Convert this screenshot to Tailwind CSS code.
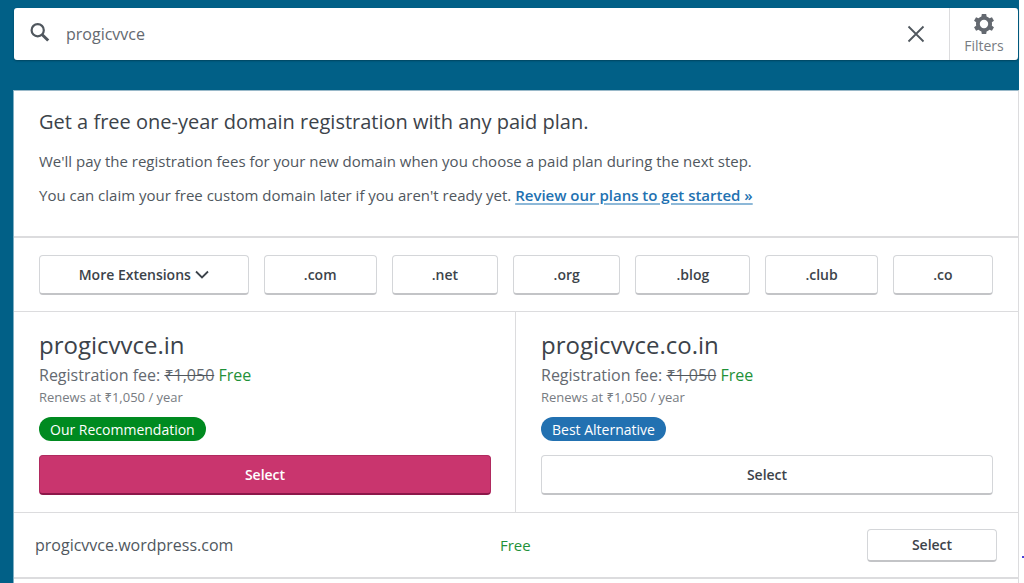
<!DOCTYPE html>
<html lang="en">
<head>
<meta charset="utf-8">
<meta name="viewport" content="width=device-width, initial-scale=1">
<title>Domain search</title>
<script src="https://cdn.jsdelivr.net/npm/@tailwindcss/browser@4"></script>
</head>
<body class="bg-white font-['Open_Sans','Noto_Sans',sans-serif] text-[15px] text-[#50575e]">
<div class="relative flex min-h-screen flex-col pr-[5px]">
  <div class="bg-[#016087] pt-2 pr-px pb-[30px] pl-[14px]">
    <form class="flex h-[52px] items-stretch rounded-[3px] bg-white shadow-[0_1px_2px_#004560]" role="search">
      <label for="q" class="flex w-[52px] items-center pl-4" aria-label="Search domains">
        <svg class="mb-1 size-5" viewBox="0 0 20 20" fill="none" stroke="#50575e"><circle cx="7.7" cy="8.2" r="6.1" stroke-width="2.2"/><path d="M12 12.500l6.200 6" stroke-width="3"/></svg>
      </label>
      <input id="q" type="text" value="progicvvce" class="min-w-0 flex-1 bg-transparent text-[16px] text-[#646970] outline-none">
      <button type="button" aria-label="Clear search" class="flex w-[66px] items-center justify-center">
        <svg class="size-5" viewBox="0 0 20 20" fill="none" stroke="#50575e" stroke-width="1.8"><path d="M2.500 2.500l15 15M17.500 2.500l-15 15"/></svg>
      </button>
      <button type="button" class="flex w-[69px] flex-col items-center border-l border-[#dcdcde] pt-1 text-[14px] leading-5 text-[#787c82]">
        <svg class="size-6" viewBox="0 0 24 24" fill="#646970"><path d="M20 12c0-.57-.05-1.120-.15-1.660l2.110-1.650-2-3.460-2.480 1a8 8 0 0 0-2.880-1.660L14.200 2h-4.400l-.4 2.570a8 8 0 0 0-2.880 1.660l-2.480-1-2 3.460 2.110 1.650a8.500 8.500 0 0 0 0 3.320l-2.110 1.650 2 3.460 2.480-1a8 8 0 0 0 2.880 1.660l.4 2.570h4.400l.4-2.570a8 8 0 0 0 2.880-1.660l2.480 1 2-3.460-2.110-1.650c.1-.54.15-1.090.15-1.660zm-8 4.200a4.200 4.200 0 1 1 0-8.400 4.200 4.200 0 0 1 0 8.400z"/></svg>
        <span>Filters</span>
      </button>
    </form>
  </div>
  <div class="flex flex-1 flex-col bg-[#016087] pl-[13px]">
    <main class="flex-1 border border-t-[#9ab9c9] border-r-[#dcdcde] border-b-0 border-l-[#80afc3] bg-white">
      <section class="h-[147px] border-b-2 border-[#dcdcde] px-[25px] pt-4">
        <h1 class="text-[20px] leading-[30px] text-[#3c434a]">Get a free one-year domain registration with any paid plan.</h1>
        <p class="mt-3 leading-6">We'll pay the registration fees for your new domain when you choose a paid plan during the next step.</p>
        <p class="mt-[10px] leading-6">You can claim your free custom domain later if you aren't ready yet. <a href="#" class="font-semibold text-[#2271b1] underline decoration-[#8db8d8] decoration-2 underline-offset-2">Review our plans to get started »</a></p>
      </section>
      <section class="flex gap-[15px] border-b border-[#dcdcde] px-[25px] pt-[17px] pb-4 text-[14px] font-semibold text-[#3c434a]">
        <button class="flex h-10 grow-[211] basis-0 items-center justify-center gap-1 rounded-[4px] border border-b-2 border-[#d4d6d9] border-b-[#c3c4c7]">More Extensions
          <svg class="w-[14px]" viewBox="0 0 14 10" fill="none" stroke="#3c434a" stroke-width="1.800"><path d="M1 1.500l6 6 6-6"/></svg></button>
        <button class="h-10 grow-[113] basis-0 rounded-[4px] border border-b-2 border-[#d4d6d9] border-b-[#c3c4c7]">.com</button>
        <button class="h-10 grow-[106] basis-0 rounded-[4px] border border-b-2 border-[#d4d6d9] border-b-[#c3c4c7]">.net</button>
        <button class="h-10 grow-[107] basis-0 rounded-[4px] border border-b-2 border-[#d4d6d9] border-b-[#c3c4c7]">.org</button>
        <button class="h-10 grow-[115] basis-0 rounded-[4px] border border-b-2 border-[#d4d6d9] border-b-[#c3c4c7]">.blog</button>
        <button class="h-10 grow-[112] basis-0 rounded-[4px] border border-b-2 border-[#d4d6d9] border-b-[#c3c4c7]">.club</button>
        <button class="h-10 grow-[100] basis-0 rounded-[4px] border border-b-2 border-[#d4d6d9] border-b-[#c3c4c7]">.co</button>
      </section>
      <div class="grid grid-cols-2 border-b border-[#dcdcde]">
        <article class="border-r border-[#dcdcde] pr-6 pl-[25px] pt-[15px] pb-[17px]">
          <h2 class="text-[24px] leading-9 text-[#3c434a]">progicvvce.in</h2>
          <p class="text-[16px] leading-6 text-[#646970]">Registration fee: <s class="decoration-[#50575e]">₹1,050</s> <span class="text-[#1f9139]">Free</span></p>
          <p class="text-[13px] leading-5 text-[#787c82]">Renews at ₹1,050 / year</p>
          <span class="mt-[10px] flex h-6 w-fit items-center rounded-full bg-[#008a20] px-[11px] text-[14px] text-white">Our Recommendation</span>
          <button class="mt-[14px] h-10 w-full rounded-[4px] border border-b-2 border-[#b02a5f] border-b-[#8c1749] bg-[#c9356e] text-[14px] font-semibold text-white">Select</button>
        </article>
        <article class="px-[25px] pt-[15px] pb-[17px]">
          <h2 class="text-[24px] leading-9 text-[#3c434a]">progicvvce.co.in</h2>
          <p class="text-[16px] leading-6 text-[#646970]">Registration fee: <s class="decoration-[#50575e]">₹1,050</s> <span class="text-[#1f9139]">Free</span></p>
          <p class="text-[13px] leading-5 text-[#787c82]">Renews at ₹1,050 / year</p>
          <span class="mt-[10px] flex h-6 w-fit items-center rounded-full bg-[#2271b1] px-[11px] text-[14px] text-white">Best Alternative</span>
          <button class="mt-[14px] h-10 w-full rounded-[4px] border border-b-2 border-[#d4d6d9] border-b-[#c3c4c7] text-[14px] font-semibold text-[#3c434a]">Select</button>
        </article>
      </div>
      <div class="grid h-[66px] grid-cols-[1fr_1fr_130px] items-center border-b-2 border-[#dcdcde] pr-[21px] pl-[21px]">
        <span class="text-[16px]">progicvvce.wordpress.com</span>
        <span class="pl-[49px] text-[15px] text-[#1f9139]">Free</span>
        <button class="h-[33px] rounded-[4px] border border-b-2 border-[#d4d6d9] border-b-[#c3c4c7] text-[14px] font-semibold text-[#3c434a]">Select</button>
      </div>
    </main>
  </div>
  <i class="absolute top-[556px] right-0 size-[2px] bg-[#4a3fd8]"></i>
</div>
</body>
</html>
